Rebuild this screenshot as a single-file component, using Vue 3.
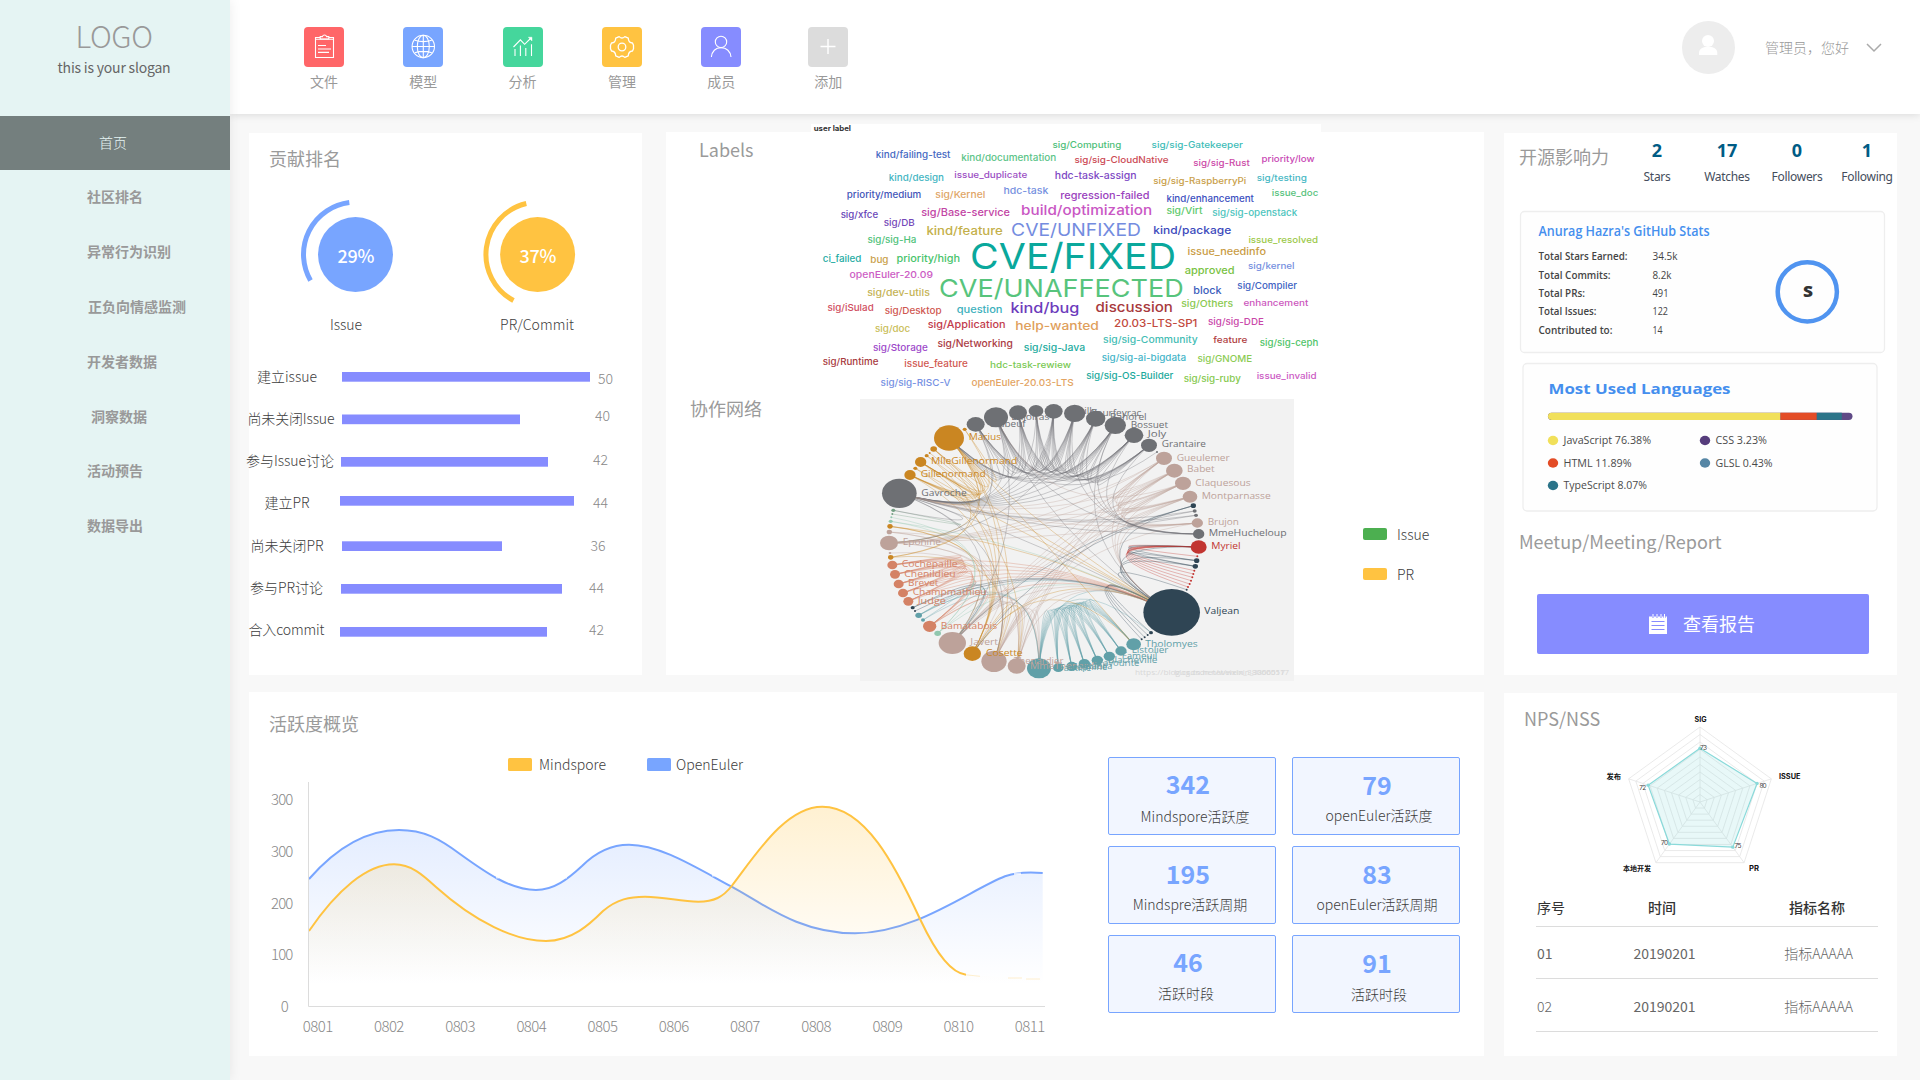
<script setup>
// ---------- navigation ----------
const navItems = [
  { label: '首页', active: true, left: 99 },
  { label: '社区排名', left: 87 },
  { label: '异常行为识别', left: 87 },
  { label: '正负向情感监测', left: 88 },
  { label: '开发者数据', left: 87 },
  { label: '洞察数据', left: 91 },
  { label: '活动预告', left: 87 },
  { label: '数据导出', left: 87 },
]

const tools = [
  { key: 'file', label: '文件' },
  { key: 'model', label: '模型' },
  { key: 'analysis', label: '分析' },
  { key: 'manage', label: '管理' },
  { key: 'member', label: '成员' },
  { key: 'add', label: '添加' },
]

// ---------- contribution ranking ----------
const bars = [
  { label: '建立issue', lx: 257, lw: 60, ly: 376.5, x: 342, w: 248, y: 372, value: 50, vx: 598, vy: 379 },
  { label: '尚未关闭Issue', lx: 247.5, lw: 87, ly: 418.5, x: 342, w: 178, y: 414.5, value: 40, vx: 595, vy: 415.5 },
  { label: '参与Issue讨论', lx: 246, lw: 88, ly: 460.5, x: 341, w: 207, y: 457, value: 42, vx: 593, vy: 459.5 },
  { label: '建立PR', lx: 264.5, lw: 45, ly: 502.5, x: 340, w: 234, y: 496, value: 44, vx: 593, vy: 502.5 },
  { label: '尚未关闭PR', lx: 250.5, lw: 73, ly: 545.5, x: 342, w: 160, y: 541.3, value: 36, vx: 590.5, vy: 545.5 },
  { label: '参与PR讨论', lx: 250, lw: 73, ly: 587.5, x: 341, w: 221, y: 584, value: 44, vx: 589, vy: 587.5 },
  { label: '合入commit', lx: 248.5, lw: 76, ly: 629.5, x: 340, w: 207, y: 627, value: 42, vx: 589, vy: 629.5 },
]

// ---------- label cloud: text, start, end, middle, size, colour ----------
const words = [
  ['sig/Computing', 733, 933, 74, 27, '#4fc07a'],
  ['sig/sig-Gatekeeper', 1021, 1286, 74, 27, '#3fbdb8'],
  ['kind/failing-test', 220, 437, 104, 28, '#4468c2'],
  ['kind/documentation', 468, 744, 114, 28, '#5cc488'],
  ['sig/sig-CloudNative', 797, 1070, 119, 27, '#cc4a55'],
  ['sig/sig-Rust', 1142, 1306, 128, 27, '#cc4aa8'],
  ['priority/low', 1340, 1494, 118, 27, '#c94ab5'],
  ['kind/design', 258, 418, 172, 28, '#42b5c2'],
  ['issue_duplicate', 448, 660, 164, 27, '#9c4fc4'],
  ['hdc-task-assign', 740, 977, 167, 29, '#7d48c4'],
  ['sig/sig-RaspberryPi', 1026, 1296, 184, 27, '#c9a04a'],
  ['sig/testing', 1326, 1472, 174, 27, '#48b8c4'],
  ['priority/medium', 136, 352, 224, 28, '#4254b8'],
  ['sig/Kernel', 393, 538, 223, 28, '#e0a566'],
  ['hdc-task', 591, 721, 212, 28, '#7590e0'],
  ['regression-failed', 756, 1015, 225, 31, '#9a42bd'],
  ['kind/enhancement', 1064, 1318, 235, 28, '#3c4fc0'],
  ['issue_doc', 1370, 1505, 218, 27, '#57c27c'],
  ['sig/xfce', 118, 227, 284, 28, '#6745b8'],
  ['sig/DB', 243, 333, 308, 28, '#7447b8'],
  ['sig/Base-service', 352, 610, 277, 31, '#c244a4'],
  ['build/optimization', 642, 1023, 272, 40, '#c957c4'],
  ['sig/Virt', 1064, 1169, 272, 28, '#5ec96c'],
  ['sig/sig-openstack', 1197, 1444, 279, 28, '#4cc4bd'],
  ['sig/sig-Ha', 196, 338, 360, 28, '#4fc27a'],
  ['kind/feature', 367, 589, 334, 34, '#c4b04a'],
  ['CVE/UNFIXED', 613, 990, 331, 52, '#748ce0'],
  ['kind/package', 1026, 1252, 331, 33, '#3c4abc'],
  ['issue_resolved', 1302, 1504, 359, 27, '#9cc94a'],
  ['ci_failed', 66, 178, 417, 28, '#1eaba3'],
  ['bug', 204, 257, 420, 28, '#c9a04a'],
  ['priority/high', 280, 465, 417, 30, '#48c46c'],
  ['CVE/FIXED', 494, 1092, 409, 108, '#0aa89c'],
  ['issue_needinfo', 1125, 1353, 396, 29, '#c99c44'],
  ['openEuler-20.09', 144, 386, 464, 28, '#cc5cc4'],
  ['approved', 1117, 1262, 451, 30, '#79c244'],
  ['sig/kernel', 1301, 1436, 438, 27, '#758fe0'],
  ['sig/dev-utils', 195, 377, 519, 28, '#c4b254'],
  ['CVE/UNAFFECTED', 404, 1114, 504, 74, '#57c47c'],
  ['block', 1142, 1224, 511, 31, '#3c60bc'],
  ['sig/Compiler', 1270, 1443, 498, 28, '#4062c2'],
  ['sig/iSulad', 80, 214, 562, 28, '#d04e5e'],
  ['sig/Desktop', 246, 411, 571, 28, '#cf5750'],
  ['question', 455, 588, 568, 29, '#3cb0bc'],
  ['kind/bug', 611, 811, 564, 42, '#6c3cbc'],
  ['discussion', 858, 1083, 563, 40, '#a83a3e'],
  ['sig/Others', 1107, 1258, 552, 28, '#8ac94f'],
  ['enhancement', 1288, 1476, 550, 27, '#cc57bd'],
  ['sig/doc', 218, 320, 626, 28, '#c9bd57'],
  ['sig/Application', 371, 597, 614, 31, '#c23c4c'],
  ['help-wanted', 625, 868, 617, 36, '#e0a05c'],
  ['20.03-LTS-SP1', 912, 1154, 609, 33, '#c24a3e'],
  ['sig/sig-DDE', 1185, 1347, 606, 28, '#c947a9'],
  ['sig/sig-Community', 880, 1155, 659, 28, '#44bdb5'],
  ['feature', 1200, 1299, 660, 27, '#b03e42'],
  ['sig/sig-ceph', 1335, 1505, 669, 28, '#4fc468'],
  ['sig/Storage', 212, 371, 683, 28, '#9c48c9'],
  ['sig/Networking', 399, 618, 670, 29, '#ab3c44'],
  ['sig/sig-Java', 650, 828, 683, 28, '#1cab9e'],
  ['sig/Runtime', 66, 228, 725, 28, '#a83a3e'],
  ['issue_feature', 303, 487, 730, 28, '#d0574f'],
  ['hdc-task-rewiew', 552, 787, 734, 27, '#7ac953'],
  ['sig/sig-ai-bigdata', 876, 1121, 713, 28, '#44b5c9'],
  ['sig/GNOME', 1154, 1313, 717, 28, '#8ccc53'],
  ['sig/sig-RISC-V', 234, 437, 787, 28, '#7591e3'],
  ['openEuler-20.03-LTS', 498, 795, 788, 28, '#e3a463'],
  ['sig/sig-OS-Builder', 831, 1084, 768, 28, '#1ba99c'],
  ['sig/sig-ruby', 1114, 1280, 776, 28, '#86c94f'],
  ['issue_invalid', 1326, 1500, 769, 27, '#cc5bc4'],
]

// ---------- collaboration network ----------
const R = '#c23531', D = '#2f4554', T = '#61a0a8', O = '#d48265', G = '#91c7ae'
const Y = '#ca8622', P = '#bda29a', K = '#6e7074', E = '#749f83'
// x, y, radius x, radius y, colour
const nodes = [
  [1046, 456, 24, 20, R], [1042, 484, 3, 3, R], [1040, 497, 8, 7, D], [1036, 514, 8, 7, D],
  [1033, 527, 3, 3, R], [1030, 537, 3, 3, R], [1027, 547, 3, 3, R], [1023, 557, 3, 3, R],
  [1019, 567, 3, 3, R], [1014, 576, 3, 3, R], [1010, 584, 3, 3, D], [965, 652, 85, 70, D],
  [903, 713, 6, 5, D], [893, 720, 3, 3, D], [884, 727, 3, 3, D], [875, 733, 3, 3, D],
  [851, 748, 22, 18, T], [813, 768, 17, 14, T], [778, 784, 17, 14, T], [742, 796, 17, 14, T],
  [703, 806, 17, 14, T], [665, 814, 16, 14, T], [625, 818, 16, 13, T], [567, 820, 36, 30, T],
  [500, 813, 27, 23, P], [432, 799, 38, 32, P], [367, 776, 26, 22, Y], [307, 744, 41, 33, P],
  [263, 715, 10, 8, G], [239, 694, 20, 17, O], [219, 675, 6, 5, T], [206, 661, 10, 8, T],
  [195, 648, 3, 3, D], [188, 638, 6, 5, D], [175, 619, 15, 13, O], [159, 594, 15, 13, O],
  [146, 567, 15, 13, O], [135, 538, 15, 13, O], [127, 510, 15, 13, O], [122, 487, 8, 7, Y],
  [120, 474, 4, 3, P], [117, 444, 27, 22, P], [118, 411, 8, 7, P], [120, 394, 8, 7, Y],
  [122, 379, 6, 5, G], [124, 367, 3, 3, G], [127, 357, 3, 3, E], [130, 346, 6, 5, E],
  [148, 295, 52, 44, K], [180, 240, 17, 15, Y], [196, 220, 6, 5, Y], [212, 201, 17, 15, Y],
  [230, 182, 6, 5, Y], [239, 174, 3, 3, Y], [251, 162, 10, 8, Y], [297, 129, 45, 38, Y],
  [344, 103, 6, 5, Y], [377, 88, 27, 22, K], [438, 67, 36, 30, K], [504, 53, 27, 22, K],
  [558, 48, 22, 18, K], [611, 49, 27, 22, K], [674, 55, 32, 26, K], [737, 71, 29, 24, K],
  [796, 91, 32, 26, K], [852, 121, 28, 23, K], [897, 151, 24, 20, K], [921, 171, 3, 3, K],
  [942, 190, 24, 20, P], [973, 227, 25, 21, P], [999, 265, 24, 20, P], [1020, 305, 22, 18, P],
  [1030, 332, 8, 7, D], [1034, 348, 6, 5, K], [1038, 361, 6, 5, K], [1042, 384, 17, 14, P],
  [1046, 417, 17, 15, K],
]
const links = {
  1: [0], 2: [0], 3: [0, 2], 4: [0], 5: [0], 6: [0], 7: [0], 8: [0], 9: [0],
  11: [10, 3, 2, 0], 12: [11], 13: [11], 14: [11], 15: [11], 17: [16], 18: [16, 17],
  19: [16, 17, 18], 20: [16, 17, 18, 19], 21: [16, 17, 18, 19, 20], 22: [16, 17, 18, 19, 20, 21],
  23: [16, 17, 18, 19, 20, 21, 22, 12, 11], 24: [23, 11], 25: [24, 23, 11], 26: [24, 11, 16, 25],
  27: [11, 23, 25, 24, 26], 28: [11, 27], 29: [23, 27, 11], 30: [23], 31: [30, 11, 23, 27],
  32: [11], 33: [11, 27], 34: [11, 29], 35: [11, 34, 29], 36: [34, 35, 11, 29],
  37: [34, 35, 36, 11, 29], 38: [34, 35, 36, 37, 11, 29], 39: [25], 40: [25], 41: [24, 25],
  42: [41, 25, 24], 43: [11, 26, 27], 44: [28, 11], 45: [28], 47: [46], 48: [47, 25, 27, 11],
  49: [26, 11], 50: [49, 24], 51: [49, 26, 11], 52: [51, 39], 53: [51], 54: [51, 49, 26],
  55: [51, 49, 39, 54, 26, 11, 16, 25, 41, 48], 56: [49, 55], 57: [55, 41, 48],
  58: [55, 48, 27, 57, 11], 59: [58, 55, 48, 57], 60: [48, 58, 59], 61: [48, 58, 60, 59, 57, 55],
  62: [55, 58, 59, 48, 57, 41, 61, 60], 63: [59, 48, 62, 57, 58, 61, 60, 55],
  64: [55, 62, 48, 63, 58, 61, 60, 59, 57, 11], 65: [63, 64, 48, 62, 58, 61, 60, 59, 57, 55],
  66: [64, 58, 59, 62, 65, 48, 63, 61, 60], 67: [57], 68: [25, 11, 24, 27, 48, 41],
  69: [25, 68, 11, 24, 27, 48, 41], 70: [25, 69, 68, 11, 24, 27, 41, 58],
  71: [27, 69, 68, 70, 11, 48, 41, 25], 72: [26, 27, 11], 73: [48], 74: [48, 73],
  75: [69, 68, 25, 48, 41, 70, 71], 76: [64, 65, 66, 63, 62, 48, 58],
}
const center = [582, 434]
const linkPaths = Object.entries(links).flatMap(([s, targets]) =>
  targets.map((t) => {
    const a = nodes[s], b = nodes[t]
    const cx = center[0] * 0.9 + ((a[0] + b[0]) / 2) * 0.1
    const cy = center[1] * 0.9 + ((a[1] + b[1]) / 2) * 0.1
    return { d: `M${a[0]} ${a[1]}Q${cx} ${cy} ${b[0]} ${b[1]}`, color: a[4] }
  })
)
const names = [
  ['Marius', 356, 453, 127, Y], ['MlleGillenormand', 243, 502, 199, Y],
  ['Gillenormand', 212, 407, 238, Y], ['Gavroche', 214, 350, 293, K],
  ['Eponine', 158, 273, 442, P], ['Cochepaille', 155, 323, 508, O],
  ['Chenildieu', 163, 317, 536, O], ['Brevet', 174, 265, 564, O],
  ['Champmathieu', 188, 410, 592, O], ['Judge', 203, 288, 618, O],
  ['Bamatabois', 272, 441, 692, O], ['Javert', 361, 444, 742, P],
  ['Cosette', 408, 518, 774, Y], ['Thenardier', 492, 640, 798, P],
  ['MmeThenardier', 540, 770, 812, P], ['Fantine', 627, 724, 819, T],
  ['Zephine', 665, 772, 817, T], ['Dahlia', 705, 787, 812, T],
  ['Favourite', 745, 868, 804, T], ['Blacheville', 774, 922, 795, T],
  ['Fameuil', 815, 922, 783, T], ['Listolier', 845, 955, 766, T],
  ['Tholomyes', 886, 1043, 746, T], ['Valjean', 1063, 1168, 649, D],
  ['Myriel', 1084, 1172, 453, R], ['MmeHucheloup', 1076, 1310, 415, K],
  ['Brujon', 1073, 1167, 381, P], ['Montparnasse', 1055, 1262, 302, P],
  ['Claquesous', 1036, 1202, 263, P], ['Babet', 1011, 1094, 223, P],
  ['Gueulemer', 980, 1139, 188, P], ['Grantaire', 935, 1068, 147, K],
  ['Joly', 893, 949, 118, K], ['Bossuet', 842, 954, 89, K],
  ['Bahorel', 780, 890, 67, K], ['Courfeyrac', 720, 874, 54, K],
  ['Feuilly', 652, 740, 47, K], ['Enjolras', 484, 598, 66, K],
  ['Mabeuf', 420, 527, 86, K],
]

// ---------- influence ----------
const counters = [
  { value: 2, label: 'Stars' }, { value: 17, label: 'Watches' },
  { value: 0, label: 'Followers' }, { value: 1, label: 'Following' },
]
const githubStats = [
  ['Total Stars Earned:', '34.5k', 256.5, 89, 25], ['Total Commits:', '8.2k', 275, 72, 19],
  ['Total PRs:', '491', 293, 46.5, 16], ['Total Issues:', '122', 311.5, 58, 15.5],
  ['Contributed to:', '14', 330, 74, 10],
]
const languages = [
  ['JavaScript 76.38%', 1553, 440.5, 87.5, '#f1e05a'], ['HTML 11.89%', 1553, 463, 68, '#e34c26'],
  ['TypeScript 8.07%', 1553, 485.5, 83.5, '#2b7489'], ['CSS 3.23%', 1705, 440.5, 51.5, '#563d7c'],
  ['GLSL 0.43%', 1705, 463, 57, '#5686a5'],
]

// ---------- activity chart ----------
const yTicks = [[300, 799.5], [300, 851.5], [200, 903.5], [100, 954.5], [0, 1006.5]]
const xTicks = ['0801', '0802', '0803', '0804', '0805', '0806', '0807', '0808', '0809', '0810', '0811']
  .map((label, i) => ({ label, x: 317.3 + i * 71.2 }))

const blueLine = 'M309 879C337 847 367 830 399 830C424 830 440 839 460 854C485 872 510 890 536 890C554 890 568 879 582 866C596 852 612 844.7 629 844.7C660 844.7 695 867 731.7 886.7C765 905 800 933.3 855 933.3C915 933.3 970 890 1005 876.3Q1020 871 1042.7 873'
const yellowLine = 'M309 931C337 890 367 864.3 394 864.3C412 864.3 424 876 436 887C475 922 515 941 546 941C572 941 590 924 603 911C617 899 630 896.7 645 896.7C665 896.7 680 901.7 698.3 901.7C714 901.7 723 897 731.7 886C755 856 785 806.7 822.3 806.7C865 806.7 895 865 920 919C938 957 952 973 966 974.8'

const summary = [
  { value: 342, label: 'Mindspore活跃度', vx: -4, vy: -1, lx: 3, ly: 0 },
  { value: 79, label: 'openEuler活跃度', vx: 1, vy: 0, lx: 3, ly: -1 },
  { value: 195, label: 'Mindspre活跃周期', vx: -4, vy: 0, lx: -2, ly: -1 },
  { value: 83, label: 'openEuler活跃周期', vx: 1, vy: 0, lx: 1, ly: -1 },
  { value: 46, label: '活跃时段', vx: -4, vy: -1, lx: -6, ly: -1 },
  { value: 91, label: '活跃时段', vx: 1, vy: 0, lx: 3, ly: 0 },
]
const shift = (x, y) => ({ transform: `translate(${x}px, ${y}px)` })

// ---------- radar ----------
const rc = [1700, 802]
const polar = (i, r) => {
  const a = (-90 + i * 72) * Math.PI / 180
  return [rc[0] + r * Math.cos(a), rc[1] + r * Math.sin(a)]
}
const ring = (values) => values.map((v, i) => polar(i, v).join(',')).join(' ')
const rings = Array.from({ length: 10 }, (_, k) => ring(Array(5).fill((k + 1) * 7.5)))
const scores = [53.7, 60, 55.8, 52, 54.5]
const scorePoints = scores.map((v, i) => polar(i, v))
const scoreLabels = [['73', 1700, 747.5], ['80', 1759.5, 785.5], ['75', 1734.5, 845.5], ['70', 1661, 842.5], ['72', 1639.3, 787.5]]
const axisLabels = [['SIG', 1694.5, 719.5, 12], ['ISSUE', 1779, 776.3, 21.5], ['PR', 1749, 868, 10], ['本地开发', 1623, 868, 28], ['发布', 1606.5, 776.3, 14.5]]

const tableRows = [['01', '20190201', '指标AAAAA'], ['02', '20190201', '指标AAAAA']]
</script>

<template>
  <div class="app">
    <aside class="sidebar">
      <div class="brand">
        <div class="logo">LOGO</div>
        <div class="slogan">this is your slogan</div>
      </div>
      <nav>
        <a v-for="n in navItems" :key="n.label" class="nav-item" :class="{ active: n.active }" :style="{ paddingLeft: n.left + 'px' }">{{ n.label }}</a>
      </nav>
    </aside>

    <div class="main">
      <header class="header">
        <div class="tools">
          <div v-for="t in tools" :key="t.key" class="tool" :class="t.key">
            <svg class="tool-icon" viewBox="0 0 40 40" fill="none" stroke="#fff" stroke-width="1.1">
              <template v-if="t.key === 'file'">
                <path d="M16 10.5H11.5V30.5H29.5V10.5H25M11.5 12.3H29.5" />
                <path d="M16.2 12v-2.4h2.2a2.2 2.2 0 0 1 4.2 0h2.2V12z" />
                <path d="M14 18.5H22M14 22H27M14 25.4H25" />
              </template>
              <template v-else-if="t.key === 'model'">
                <circle cx="20.3" cy="19.5" r="11.2" />
                <ellipse cx="20.3" cy="19.5" rx="6" ry="11.2" />
                <path d="M20.3 8.3V30.7M9.1 19.5H31.5M11.8 13.2Q20.3 16 28.8 13.2M11.8 25.8Q20.3 23 28.8 25.8" />
              </template>
              <template v-else-if="t.key === 'analysis'">
                <path d="M12 22V29M17.4 18.5V29M22.8 21V29M28.5 17.3V29M10.5 20L17.4 12.8L21.6 17.3L28 11" />
                <path d="M25.3 10.2H29V14z" fill="#fff" stroke-width=".4" />
              </template>
              <template v-else-if="t.key === 'manage'">
                <path d="M17.2 9.6Q20 12.4 22.8 9.6L26.3 11.2Q26.4 15.7 30.5 16L31.5 18.2V21.8L30.5 24Q26.4 24.3 26.3 28.8L22.8 30.4Q20 27.6 17.2 30.4L13.7 28.8Q13.6 24.3 9.5 24L8.5 21.8V18.2L9.5 16Q13.6 15.7 13.7 11.2Z" stroke-width="1.3" stroke-linejoin="round" />
                <circle cx="20" cy="20" r="3.8" stroke-width="1.3" />
              </template>
              <template v-else-if="t.key === 'member'">
                <ellipse cx="20" cy="14.9" rx="5.7" ry="5.7" />
                <path d="M10.4 30C10.8 24.5 14.5 20.6 20 20.6S29.6 24.5 30 30" />
              </template>
              <path v-else d="M20 12V27M12.5 19.5H27.5" stroke-width="1.4" />
            </svg>
            <span class="tool-label">{{ t.label }}</span>
          </div>
        </div>
        <div class="user">
          <svg class="avatar" viewBox="0 0 53 53">
            <circle cx="26.5" cy="26.5" r="26.5" fill="#ededed" />
            <circle cx="26" cy="20" r="6" fill="#fff" />
            <path d="M17 34v-2c0-3.5 2.6-5.2 6.3-6h5.8c3.7.8 6.2 2.5 6.2 6v2z" fill="#fff" />
          </svg>
          <span class="hello">管理员，您好</span>
          <svg class="chevron" viewBox="0 0 16 10"><path d="M1 1l7 7 7-7" fill="none" stroke="#aaa" stroke-width="1.5" /></svg>
        </div>
      </header>

      <main class="content">
        <div class="row top-row">
          <section class="card ranking">
            <h2 class="title">贡献排名</h2>
            <svg class="ranking-chart" viewBox="249 183 393 492">
              <circle cx="355.5" cy="254.6" r="37.5" fill="#78a5ff" />
              <path d="M349.3 202.5A52.3 52.3 0 0 0 310.5 280.5" fill="none" stroke="#78a5ff" stroke-width="5" />
              <text x="337.5" y="262.5" class="pct" textLength="37">29%</text>
              <circle cx="537.6" cy="254.6" r="37.5" fill="#ffc341" />
              <path d="M526.3 203.5A52.3 52.3 0 0 0 513.5 300.5" fill="none" stroke="#ffc341" stroke-width="5" />
              <text x="519.5" y="262.5" class="pct" textLength="37">37%</text>
              <text x="330" y="330" class="lbl" textLength="32">Issue</text>
              <text x="500" y="330" class="lbl" textLength="74">PR/Commit</text>
              <g v-for="b in bars" :key="b.label">
                <text :x="b.lx" :y="b.ly + 5.5" class="lbl" :textLength="b.lw">{{ b.label }}</text>
                <rect :x="b.x" :y="b.y" :width="b.w" height="9.7" fill="#868cff" />
                <text :x="b.vx" :y="b.vy + 5.3" class="val">{{ b.value }}</text>
              </g>
            </svg>
          </section>

          <section class="card network">
            <div class="network-titles">
              <h2 class="title">Labels</h2>
              <h2 class="title second">协作网络</h2>
            </div>
            <div class="figures">
              <svg class="cloud" viewBox="0 0 1568 840" preserveAspectRatio="none">
                <rect x="32" y="12" width="1481" height="100" fill="#fff" />
                <text x="40" y="33" font-size="21" font-weight="700" fill="#333" textLength="108" lengthAdjust="spacingAndGlyphs">user label</text>
                <text v-for="w in words" :key="w[0] + w[1]" :x="w[1]" :y="w[3] + w[4] * 0.35" :font-size="w[4]" :fill="w[5]" :font-weight="w[4] > 50 ? 400 : 500" :textLength="w[2] - w[1]" lengthAdjust="spacingAndGlyphs">{{ w[0] }}</text>
              </svg>
              <svg class="graph" viewBox="0 0 1380 870">
                <rect x="30" y="12" width="1302" height="846" fill="#f2f2f2" />
                <g fill="none" stroke-width="2" stroke-opacity="0.5">
                  <path v-for="(l, i) in linkPaths" :key="i" :d="l.d" :stroke="l.color" />
                </g>
                <ellipse v-for="(n, i) in nodes" :key="i" :cx="n[0]" :cy="n[1]" :rx="n[2]" :ry="n[3]" :fill="n[4]" />
                <text v-for="n in names" :key="n[0]" :x="n[1]" :y="n[3] + 9" font-size="28" :fill="n[4]" :textLength="n[2] - n[1]" lengthAdjust="spacingAndGlyphs">{{ n[0] }}</text>
                <g font-size="24" fill="#d8d8d8">
                  <text x="855" y="839" textLength="450" lengthAdjust="spacingAndGlyphs">https://blog.csdn.net/weixin_38060517</text>
                  <text x="973" y="839" textLength="344" lengthAdjust="spacingAndGlyphs">blog.csdn.net/weixin_38060517</text>
                </g>
              </svg>
            </div>
            <div class="side-legend">
              <span class="key"><i class="swatch green"></i>Issue</span>
              <span class="key"><i class="swatch amber"></i>PR</span>
            </div>
          </section>

          <section class="card influence">
            <div class="influence-head">
              <h2 class="title">开源影响力</h2>
              <div v-for="c in counters" :key="c.label" class="counter">
                <b>{{ c.value }}</b>
                <span>{{ c.label }}</span>
              </div>
            </div>
            <svg class="github" viewBox="1504 205 393 312">
              <rect x="1520.5" y="211.5" width="364" height="141" rx="4" fill="#fefefe" stroke="#eeeeee" stroke-width="1.3" />
              <text x="1538.5" y="236.3" font-size="14" font-weight="600" fill="#458fee" textLength="171" lengthAdjust="spacingAndGlyphs">Anurag Hazra's GitHub Stats</text>
              <g v-for="s in githubStats" :key="s[0]" font-size="10.3" fill="#444">
                <text x="1538.5" :y="s[2] + 3.8" font-weight="600" :textLength="s[3]" lengthAdjust="spacingAndGlyphs">{{ s[0] }}</text>
                <text x="1652.5" :y="s[2] + 3.8" :textLength="s[4]" lengthAdjust="spacingAndGlyphs">{{ s[1] }}</text>
              </g>
              <circle cx="1807.3" cy="291.8" r="29.6" fill="none" stroke="#5094f0" stroke-width="4.5" />
              <text x="1803" y="296.5" font-size="15" font-weight="800" fill="#333" textLength="10" lengthAdjust="spacingAndGlyphs">S</text>

              <rect x="1523" y="363.5" width="354" height="147.5" rx="4" fill="#fefefe" stroke="#eeeeee" stroke-width="1.3" />
              <text x="1548.5" y="394.3" font-size="15" font-weight="700" fill="#458fee" textLength="182" lengthAdjust="spacingAndGlyphs">Most Used Languages</text>
              <rect x="1548" y="412.7" width="304.5" height="7.2" rx="3.6" fill="#5f4a86" />
              <path d="M1551.6 412.7H1780.5V419.9H1551.6A3.6 3.6 0 0 1 1551.6 412.7Z" fill="#f1e05a" />
              <rect x="1780.5" y="412.7" width="36.3" height="7.2" fill="#e34c26" />
              <rect x="1816.8" y="412.7" width="25" height="7.2" fill="#2b7489" />
              <g v-for="l in languages" :key="l[0]">
                <ellipse :cx="l[1]" :cy="l[2]" rx="5.2" ry="4.7" :fill="l[4]" />
                <text :x="l[1] + 10.5" :y="l[2] + 3.7" font-size="11" fill="#4a4a4a" :textLength="l[3]" lengthAdjust="spacingAndGlyphs">{{ l[0] }}</text>
              </g>
            </svg>
            <h2 class="title meetup">Meetup/Meeting/Report</h2>
            <button class="report">
              <svg viewBox="0 0 18 20">
                <path d="M0 2.5H18V20H0z" fill="#fff" />
                <path d="M2.5 7.5H15.5M2.5 11.5H15.5M2.5 15.5H15.5" stroke="#868cff" stroke-width="1" />
                <path d="M4 0V4M8 0V4M12 0V4M15.5 0V4" stroke="#868cff" stroke-width="2" />
                <path d="M4 0V4M8 0V4M12 0V4M15.5 0V4" stroke="#fff" stroke-width="1" />
              </svg>
              <span>查看报告</span>
            </button>
          </section>
        </div>

        <div class="row bottom-row">
          <section class="card activity">
            <h2 class="title">活跃度概览</h2>
            <div class="activity-body">
              <svg class="activity-chart" viewBox="249 740 859 316">
                <defs>
                  <linearGradient id="fillBlue" gradientUnits="userSpaceOnUse" x1="0" y1="830" x2="0" y2="985">
                    <stop offset="0" stop-color="#78a5ff" stop-opacity=".2" />
                    <stop offset="1" stop-color="#78a5ff" stop-opacity="0" />
                  </linearGradient>
                  <linearGradient id="fillYellow" gradientUnits="userSpaceOnUse" x1="0" y1="806" x2="0" y2="982">
                    <stop offset="0" stop-color="#ffc341" stop-opacity=".24" />
                    <stop offset="1" stop-color="#ffc341" stop-opacity="0" />
                  </linearGradient>
                </defs>
                <rect x="508" y="758" width="24" height="13" rx="1.5" fill="#ffc341" />
                <text x="539" y="770" class="lbl" textLength="67">Mindspore</text>
                <rect x="647" y="758" width="24" height="13" rx="1.5" fill="#78a5ff" />
                <text x="676" y="770" class="lbl" textLength="67">OpenEuler</text>
                <path :d="blueLine + 'V985H309Z'" fill="url(#fillBlue)" />
                <path :d="blueLine" fill="none" stroke="#78a5ff" stroke-width="2" />
                <path d="M496 877.2H499M563 877.2H567M712 875.3H715M1014 873.8H1021" stroke="#fff" stroke-width="2.5" stroke-opacity=".7" />
                <path :d="yellowLine + 'L1042 980V985H309Z'" fill="url(#fillYellow)" />
                <path :d="yellowLine" fill="none" stroke="#ffc341" stroke-width="2" />
                <path d="M966 974.8L980 976.3M1008 978H1022M1026 979H1040" stroke="#ffc341" stroke-opacity=".25" fill="none" />
                <path d="M308.5 782V1006.5H1045" fill="none" stroke="#dcdcdc" />
                <g class="tick">
                  <text v-for="(t, i) in yTicks" :key="i" :x="t[0] ? 292.5 : 288" :y="t[1] + 5.5" text-anchor="end">{{ t[0] }}</text>
                  <text v-for="t in xTicks" :key="t.label" :x="t.x - 14.5" y="1032" textLength="29.5">{{ t.label }}</text>
                </g>
              </svg>
              <div class="summary">
                <div v-for="(s, i) in summary" :key="i" class="summary-box">
                  <b :style="shift(s.vx, s.vy)">{{ s.value }}</b>
                  <span :style="shift(s.lx, s.ly)">{{ s.label }}</span>
                </div>
              </div>
            </div>
          </section>

          <section class="card nps">
            <h2 class="title">NPS/NSS</h2>
            <svg class="radar" viewBox="1504 710 393 174">
              <g fill="none" stroke="#e4e4e4" stroke-width=".8">
                <polygon v-for="(r, i) in rings" :key="i" :points="r" />
                <line v-for="i in 5" :key="'a' + i" :x1="rc[0]" :y1="rc[1]" :x2="polar(i, 75)[0]" :y2="polar(i, 75)[1]" />
              </g>
              <polygon :points="ring(scores)" fill="#8adada" fill-opacity=".2" stroke="#8adada" stroke-width="1.2" />
              <circle v-for="(p, i) in scorePoints" :key="'p' + i" :cx="p[0]" :cy="p[1]" r="1.7" fill="#8adada" />
              <text v-for="l in scoreLabels" :key="l[0]" :x="l[1]" :y="l[2] + 2.2" font-size="6.5" fill="#444" textLength="7">{{ l[0] }}</text>
              <text v-for="l in axisLabels" :key="l[0]" :x="l[1]" :y="l[2] + 2.5" font-size="7" font-weight="700" fill="#111" :textLength="l[3]" lengthAdjust="spacingAndGlyphs">{{ l[0] }}</text>
            </svg>
            <table>
              <thead>
                <tr><th class="c1">序号</th><th class="c2">时间</th><th class="c3">指标名称</th></tr>
              </thead>
              <tbody>
                <tr v-for="(r, i) in tableRows" :key="r[0]"><td class="c1" :class="{ strong: i === 0 }">{{ r[0] }}</td><td class="c2 strong">{{ r[1] }}</td><td class="c3">{{ r[2] }}</td></tr>
              </tbody>
            </table>
          </section>
        </div>
      </main>
    </div>
  </div>
</template>

<style>
html, body { margin: 0; background: #f8f8f8; }
</style>

<style scoped>
.app { display: flex; width: 1920px; height: 1080px; overflow: hidden; background: #f8f8f8; font-family: "Noto Sans CJK SC", "Noto Sans", sans-serif; color: #999; }
.app * { box-sizing: border-box; }
.sidebar { width: 230px; height: 1080px; background: #e5f4f3; box-shadow: 0 0 12px rgba(0, 0, 0, .08); flex: none; z-index: 1; }
.brand { height: 116px; display: flex; flex-direction: column; align-items: center; padding: 14px 2px 0 0; }
.logo { font-size: 30px; line-height: 42px; font-weight: 300; letter-spacing: -.4px; }
.slogan { font-size: 14px; line-height: 20px; margin-top: 1px; color: #666; white-space: nowrap; letter-spacing: -.2px; }
.nav-item { display: block; height: 54.9px; line-height: 53px; font-size: 14px; font-weight: 700; color: #999; }
.nav-item.active { height: 54px; line-height: 52px; background: #747f7e; color: #e5f4f3; font-weight: 300; }

.main { flex: 1; min-width: 0; display: flex; flex-direction: column; }
.header { height: 114px; flex: none; background: #fff; box-shadow: 0 1px 8px rgba(0, 0, 0, .12); display: flex; justify-content: space-between; padding: 0 38px 0 74px; }
.tools { display: flex; padding-top: 27px; }
.tool { width: 40px; margin-right: 59.3px; display: flex; flex-direction: column; align-items: center; }
.tool-icon { width: 40px; height: 40px; border-radius: 4px; }
.tool.file .tool-icon { background: #ff6668; }
.tool.model .tool-icon { background: #78a5ff; }
.tool.analysis .tool-icon { background: #45d69c; }
.tool.manage .tool-icon { background: #ffc341; }
.tool.member .tool-icon { background: #868cff; }
.tool.member { margin-right: 67px; }
.tool.add .tool-icon { background: #dcdcdc; }
.tool-label { font-size: 14px; line-height: 20px; margin-top: 4px; white-space: nowrap; }
.user { display: flex; align-items: center; height: 95px; }
.avatar { width: 53px; height: 53px; }
.hello { margin-left: 30px; width: 84px; font-size: 14px; line-height: 20px; padding-bottom: 1px; font-weight: 300; white-space: nowrap; }
.chevron { width: 16px; height: 10px; margin-left: 17px; }

.content { padding: 19px 0 0 19px; }
.row { display: flex; }
.top-row { height: 542px; }
.bottom-row { height: 364px; margin-top: 17px; }
.card { background: #fff; flex: none; }
.title { margin: 0; font-size: 18px; line-height: 26px; font-weight: 400; color: #9a9a9a; white-space: nowrap; }

.ranking { width: 393px; padding-top: 12px; }
.ranking .title { padding-left: 20px; }
.ranking-chart { display: block; width: 393px; height: 492px; margin-top: 12px; overflow: visible; }
svg .lbl { font-size: 14px; font-weight: 300; fill: #3c3c3c; }
svg .val { font-size: 14px; font-weight: 300; fill: #888; }
svg .pct { font-size: 18px; font-weight: 500; fill: #fff; }

.network { width: 818px; margin-left: 24px; margin-top: -1px; height: 543px; display: flex; }
.network-titles { width: 134px; padding-top: 4px; }
.network-titles .title { padding-left: 33px; }
.network-titles .title.second { padding-left: 24px; margin-top: 233px; }
.figures { width: 540px; margin-top: -12px; }
.cloud { display: block; width: 540px; height: 280px; font-family: Inter, sans-serif; }
.graph { display: block; width: 460px; height: 290px; margin: -5px 0 0 50px; font-family: "Open Sans", sans-serif; }
.side-legend { padding: 392px 0 0 23px; display: flex; flex-direction: column; gap: 20px; }
.key { display: flex; align-items: center; height: 20px; font-size: 14px; font-weight: 300; color: #3c3c3c; }
.swatch { width: 24px; height: 12px; border-radius: 2px; margin-right: 10px; }
.green { background: #4caf50; }
.amber { background: #ffc341; }

.influence { width: 393px; margin-left: 20px; }
.influence-head { display: flex; height: 72px; padding-left: 15px; }
.influence-head .title { width: 103px; flex: none; padding-top: 10px; }
.counter { width: 70px; flex: none; display: flex; flex-direction: column; align-items: center; font-family: "Noto Sans", sans-serif; padding-top: 5px; }
.counter b { font-size: 18px; line-height: 24px; color: #005c85; font-weight: 700; }
.counter span { font-size: 12px; line-height: 18px; margin-top: 6px; color: #444d5c; letter-spacing: -.3px; }
.github { display: block; width: 393px; height: 312px; font-family: "Open Sans", sans-serif; }
.meetup { padding-left: 15px; margin-top: 11px; }
.report { display: flex; align-items: center; justify-content: center; gap: 16px; width: 332px; height: 60px; margin: 40px 0 0 33px; border: 0; padding: 0 2px 1px 0; border-radius: 2px; background: #868cff; color: #fff; font-family: inherit; font-size: 18px; }
.report svg { width: 18px; height: 20px; }
.report span { line-height: 26px; padding-bottom: 2px; }

.activity { width: 1235px; }
.activity .title { padding: 18px 0 4px 20px; }
.activity-body { display: flex; }
.activity-chart { width: 859px; height: 316px; flex: none; }
.tick { font-size: 15px; font-weight: 300; fill: #888; letter-spacing: -.9px; }
.summary { display: grid; grid-template-columns: 168px 168px; grid-auto-rows: 78px; gap: 11px 16px; padding-top: 17px; }
.summary-box { border: 1px solid #78a5ff; border-radius: 2px; background: #f2f6ff; display: flex; flex-direction: column; align-items: center; padding-top: 9px; }
.summary-box b { font-size: 25px; line-height: 34px; color: #78a5ff; font-weight: 700; }
.summary-box span { font-size: 14px; line-height: 20px; margin-top: 5px; font-weight: 300; color: #3c3c3c; white-space: nowrap; }

.nps { width: 393px; margin: 1px 0 0 20px; }
.nps .title { padding: 12px 0 0 20px; height: 17px; overflow: visible; }
.radar { display: block; width: 393px; height: 174px; font-family: Inter, "Noto Sans CJK SC", sans-serif; }
table { width: 342px; margin: 6px 0 0 32px; border-collapse: collapse; table-layout: fixed; font-size: 14px; }
th, td { padding: 2px 0 0; border-bottom: 1px solid #dcdcdc; font-weight: 400; line-height: 20px; height: 52.5px; white-space: nowrap; }
th { height: 36px; padding: 0 0 2px; color: #333; font-weight: 500; }
td { color: #666; font-weight: 300; }
td.strong { font-weight: 400; }
.c1 { width: 82px; text-align: left; padding-left: 1px; }
th.c1 { font-weight: 400; }
.c2 { width: 88px; text-align: center; }
td.c2 { padding-left: 5px; }
.c3 { text-align: right; padding-right: 25px; }
th.c3 { padding-right: 33px; }
</style>
